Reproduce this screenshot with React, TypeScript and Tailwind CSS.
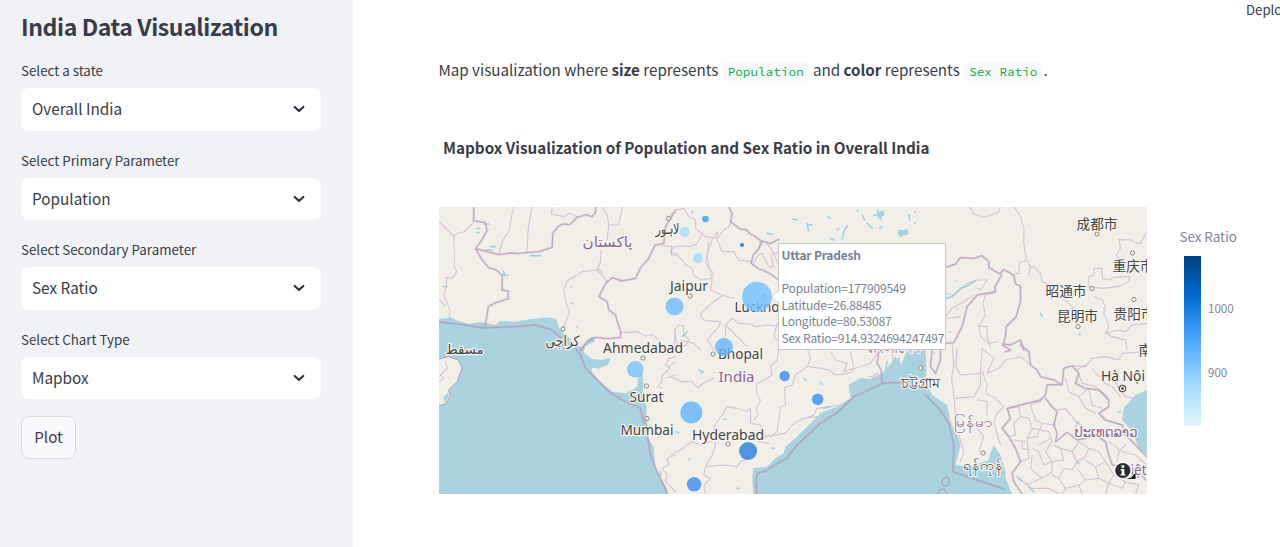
import { ReactNode } from "react";

const SANS = "font-['Source_Sans_Pro','Noto_Sans_CJK_SC',sans-serif]";

function SelectField({ label, value }: { label: string; value: string }) {
  return (
    <div className="mb-[17px] h-[72.5px]">
      <div className="mb-[5px] h-[25px] pt-px text-[13.35px] leading-6 whitespace-nowrap">{label}</div>
      <div className="flex h-[42.5px] items-center justify-between rounded-lg bg-white pr-[15px] pl-[11px]">
        <span className="pb-[2px] text-[15.3px] leading-6">{value}</span>
        <svg className="h-4 w-[14px]" viewBox="0 0 14 16" fill="none" stroke="#31333f" strokeWidth="2.2" strokeLinecap="round" strokeLinejoin="round">
          <path d="M2.7 6 7 10 11.3 6" />
        </svg>
      </div>
    </div>
  );
}

function Code({ children }: { children: ReactNode }) {
  return (
    <code className="mx-px rounded bg-[#f8f9fb] px-[5px] py-[2px] font-['Source_Code_Pro','Noto_Sans_Mono_CJK_SC','DejaVu_Sans_Mono',monospace] text-[12.7px] text-[#09ab3b]">
      {children}
    </code>
  );
}

/* Vector tiles use a 3x coordinate grid. */
function Tile({ x, y, major = "", minor = "", lakes = "" }: { x: number; y: number; major?: string; minor?: string; lakes?: string }) {
  return (
    <g transform={`translate(${x} ${y}) scale(.33333)`} fill="none" strokeLinejoin="round" strokeLinecap="round">
      <path d={lakes} stroke="#9ed3e2" strokeWidth="5" />
      <path d={minor} stroke="#cfb8cf" strokeWidth="3.4" opacity=".8" />
      <path d={major} stroke="#b590b5" strokeWidth="8" opacity=".18" />
      <path d={major} stroke="#b59ab8" strokeWidth="4" opacity=".75" />
    </g>
  );
}

type Label = { t: string; x: number; y: number; w: number; s?: number; c?: string };
const labels: Label[] = [
  { t: "پاکستان", x: 582, y: 247, w: 50, s: 14, c: "#8b6590" },
  { t: "لاہور", x: 655, y: 234, w: 24, s: 14 },
  { t: "کراچی", x: 545, y: 346, w: 34, s: 14 },
  { t: "مسقط", x: 445, y: 354, w: 38, s: 13 },
  { t: "Jaipur", x: 669.5, y: 291, w: 38 },
  { t: "Lucknow", x: 734, y: 312, w: 55 },
  { t: "Ahmedabad", x: 602.5, y: 353, w: 80 },
  { t: "Bhopal", x: 717.5, y: 359, w: 45 },
  { t: "India", x: 718, y: 382, w: 36, c: "#8b6590" },
  { t: "Surat", x: 629, y: 402, w: 34 },
  { t: "Mumbai", x: 620, y: 434.5, w: 53 },
  { t: "Hyderabad", x: 691.5, y: 439.5, w: 72 },
  { t: "成都市", x: 1076, y: 229, w: 41 },
  { t: "重庆市", x: 1112, y: 271, w: 41 },
  { t: "昭通市", x: 1045, y: 295.5, w: 41 },
  { t: "昆明市", x: 1056.5, y: 320.5, w: 41 },
  { t: "贵阳市", x: 1113, y: 318.5, w: 41 },
  { t: "南宁市", x: 1138, y: 355, w: 41 },
  { t: "Hà Nội", x: 1100.5, y: 381, w: 44 },
  { t: "বাংলাদেশ", x: 864, y: 353, w: 56, c: "#8b6590" },
  { t: "চট্টগ্রাম", x: 900, y: 388, w: 40 },
  { t: "မြန်မာ", x: 953, y: 427, w: 39, c: "#8b6590" },
  { t: "ရန်ကုန်", x: 962, y: 470, w: 41 },
  { t: "ປະເທດລາວ", x: 1074, y: 437, w: 63, c: "#8b6590" },
  { t: "Việt Nam", x: 1122, y: 475, w: 58, c: "#8b6590" },
];

const towns = [
  [668, 218.5], [689.5, 296], [562.5, 329], [763, 297], [642.5, 358], [646, 386], [646.5, 418.5], [712.5, 354],
  [727.5, 444], [1096.5, 234], [1132, 253], [1091.5, 288.5], [1077.5, 326.5], [1133.5, 299.5], [920, 368], [982.5, 453],
];

const bubbles: [number, number, number, string][] = [
  [705, 219, 3.3, "#3d9df3"], [684, 232, 5, "#a6dcff"], [697.5, 258.3, 5, "#a6dcff"], [741.5, 245, 2.1, "#1c73cc"],
  [674, 306.5, 9, "#70bdff"], [756.5, 296.8, 15, "#76c1ff"], [723.5, 347, 9, "#6ab7fc"], [634.8, 369.3, 8.3, "#7cc1ff"],
  [690.8, 412.5, 11, "#66b5fc"], [784.2, 376, 5.2, "#3d91e8"], [817.2, 399.3, 5.8, "#3d91e8"],
  [747.6, 451, 9, "#2b83dc"], [693.6, 484.3, 7.2, "#3d91e8"],
];

function IndiaMap() {
  return (
    <svg className="block h-[287px] w-[708px]" viewBox="438.5 207 708 287">
      <rect x="438" y="207" width="709" height="287" fill="#f2efe9" />
      <g fill="#aad3df">
        <path d="M438 319 451 317.3 455 320 468 324 480 322 495 325 500 320.7 515 321.7 530 319 550 317.3 556 319 558 327 563 333 568 337 575 345 582 347 587 340 592 336 595 341 585 346 583 352 591.7 359 601 360 610 357.7 608 364.3 598 369 591.7 366.7 591 371 598 380 611.7 391.7 625 393.3 636.7 386.7 637.7 376.7 641.7 370 643 381.7 642 395 645.7 405 646.7 435 653.3 448 655 468 665 488 668 494H438Z" />
        <path d="M753 494 751.7 478 753 468 766.7 466.7 774 459 783 453 785 446.7 793 440 806.7 426.7 820 413 836.7 406.7 850 398 848 385 860 378 870 379 882 373 890 364 895 356 900 366 906 352 925 350 926 368 925 381.7 931.7 395 946.7 405 950 421.7 956.7 435 960 445 955 465 968 466.7 988 460 993 445 1000 455 1005 471.7 1005 478 1011.7 494Z" />
        <path d="M1146.5 390 1135 395 1123.3 408 1121.7 420 1131.7 431.7 1138.3 448.3 1147 455Z" />
      </g>
      <path d="M438 359 448 356.7 458 360 461.7 368 456.7 381.7 448 390 450 396.7 445 404 438 406Z" fill="#f2efe9" stroke="#b79ab9" strokeWidth="1" />
      <g fill="#aad3df">
        <path d="M443 397 447 393 449 396 444 403Z" />
        <path d="M876 213 884 210 883 215 878 219Z" />
        <path d="M897 232 907 229 908 234 899 237Z" />
      </g>
      <Tile
        x={435} y={200}
        major="M115 20 114 62 148 68 155 90 136 125 120 146 155 155 190 164 225 159 250 160 275 158 310 155 350 142 352 100 368 80 382 72 402 74 412 65 425 52 450 44 470 50 480 38V20 M120 146 140 180 160 203 182 210 200 225V270L218 273 218 296 180 308 158 320 155 345 148 382 M720 32 690 80 685 130 658 136 640 175 615 203 600 235 560 243 530 233 512 248 490 290 515 305 520 330 540 345 555 395 555 412 520 416 480 412 455 424 435 450 M11 366 80 374 145 384 240 380 300 375 345 388 375 412"
        minor="M11 66 55 108 70 98 85 96 114 68 M55 108 57 200 64 215 50 235 32 232 33 260 25 285 43 330 40 358 M11 300 30 318 M235 20 228 50 222 90 200 125 190 162 M290 20 282 60 277 100 274 156 M350 20 348 42 385 50 400 40 425 50 M500 20 515 45 520 75 548 75 562 20 M520 75 515 120 M497 150 495 185 485 210 440 215 395 243 385 270 392 310 402 335 385 380 M485 205 500 215 500 225 482 210 M500 225 515 245 M555 398 605 395 630 408 650 403 675 424 655 440 M715 450 720 385 M680 138H708V165H720"
        lakes="M125 85H133M123 98H131M148 72H160M150 150H170M165 140H180M200 225H218M204 214 208 226M24 260H34M285 167H315M408 260V262M408 310H412M425 382V380"
      />
      <Tile
        x={435} y={345}
        major="M420 10 435 30 450 70 485 105 520 140 560 165 615 190 622 225 632 240 638 290 645 330 665 380 690 430 695 447"
        minor="M11 110 25 100 15 90 35 70 30 50 M720 35 700 40 690 60 705 70 680 90 680 110 665 125 680 130 M720 330 695 340 700 360 680 370 695 390 690 410 720 440 M720 50 700 65 M720 90 690 100"
        lakes="M470 66 500 60 520 45M675 380 676 390"
      />
      <Tile
        x={670} y={200}
        major="M175 20 185 42 180 65 210 88 225 88 240 102 255 110 270 122 300 130 325 118 M275 125 262 150 248 165 242 190 262 205 280 212 300 222 325 240"
        minor="M40 25 55 50 75 60 75 85 105 110 140 115 160 90 175 80 182 65 M75 85 95 100 80 130 60 140 35 138 10 140 0 155 20 165 35 180 45 195 65 205 70 225 90 240 122 235 130 220 115 205 105 185 110 160 125 120 140 95 M0 45 15 30 40 25 M140 95 140 120 155 155 190 155 205 180 240 185 M115 125 110 170 125 240 120 270 155 285 190 295 M155 288 130 305 95 335 90 350 105 362 150 365 145 380 110 420 130 450 M12 390 25 375 38 378 40 400 55 420 45 438 20 430 12 400 M165 410 165 375 185 355 205 370 240 372 255 380 290 375 325 378 M250 190 262 165 275 160 295 200 310 200 300 165 325 155 M270 125 265 150 M290 130 310 160 325 200 M320 370 310 410 325 425 M30 420 70 430 90 450 M165 375 200 410 230 440"
        lakes="M365 57 380 60M410 70 414 92M415 75 425 73M472 50 480 56M480 115 490 120M500 90 505 86M515 118 520 95 530 78M590 70 605 84M575 45 582 60M560 30 562 34M610 46 640 44M622 32 625 54M632 36 632 58M628 86 634 80M715 45 718 60M685 92 710 96M690 100 705 103M290 100 305 103M65 35 66 38M35 410 50 396"
      />
      <Tile
        x={670} y={345}
        major="M258 447 257 400 262 385 285 378 350 338 380 300 450 235 500 203 550 155 595 135 635 115 690 112 720 108 M635 115 632 75 620 55 625 20"
        minor="M0 95 35 110 65 110 80 128 105 110 130 100 M325 15 320 45 300 65 305 90 280 105 258 118 260 150 270 165 258 190 262 210 250 225 M410 10 420 40 410 65 375 90 365 120 342 128 345 180 330 185 325 225 320 260 300 275 M415 65 450 70 475 75 495 90 535 85 555 70 600 55 620 25 M130 245 155 210 170 185 200 190 230 200 240 190 240 235 270 240 285 275 265 290 295 295 M130 245 135 300 125 330 105 365 155 360 200 365 210 350 235 340 M0 330 30 315 65 290 95 300 130 285 M105 365 100 390 120 400 100 420 105 447 M285 275 345 265 365 240 400 220 440 215 M390 225 430 210 440 190 510 180 M480 20 495 45 530 55 520 80 550 70 540 20 M665 20 670 60 660 90 M595 95 605 95 620 85 628 105 605 95"
        lakes="M85 75 98 80 92 84M400 100 408 106M450 110 455 118M160 223H167M18 260 25 263M55 343H58M200 430H205M650 50 645 75M675 85 665 110M685 40 690 80M712 55 710 85M460 190 480 185M305 310H312"
      />
      <Tile
        x={905} y={200}
        major="M120 203 150 192 165 173 205 175 230 167 250 185 250 203 283 222 295 208 325 226 330 252 345 258 345 305 332 350 302 380 300 410 293 432 315 435 345 420 355 450 M120 430 145 428 170 380 185 320 215 285 270 275 268 262 288 225"
        minor="M190 20 205 42 235 52 265 42 280 35 285 20 M325 20 345 50 355 85 355 130 362 180 375 200 385 200 405 220 410 245 455 262 M362 180 342 190 340 220 325 222 M370 225 375 200 M723 95 705 130 690 128 675 120 640 118 645 145 632 165 645 180 M550 260 550 230 565 225 565 205 590 205 590 235 610 240 625 232 672 230 670 245 635 260 590 265 570 262 550 260 M565 290 590 300 600 320 595 340 610 380 600 400 640 390 660 395 680 375 723 370 M465 290 490 310 505 325 485 330 M600 400 620 410 660 420 665 450 M145 285 185 250 215 240 245 240 225 270 215 265 M120 280 145 285 M120 350 140 325 170 308 205 285 M125 355 165 350 M240 285 232 310 240 345 220 378 245 380 245 410 255 440 M240 285 268 278 M220 378 225 410 250 430 275 425"
        lakes="M122 295 140 290 165 265 185 258 210 242M405 340 410 350M523 400V405M30 35V38M10 48V45M28 70V68M152 243H154M155 327H157M133 395H135"
      />
      <Tile
        x={905} y={345}
        major="M290 0 315 15 300 20 M345 0 370 20 375 60 395 75 405 95 445 105 470 120 475 70 500 62 520 85 510 115 540 130 580 135 610 165 610 185 580 205 600 225 650 240 660 270 690 300 723 335 M470 118 425 120 420 150 405 165 345 180 305 190 315 220 290 250 310 275 330 310 345 350 320 385 325 410 350 447 M420 160 435 180 455 200 445 240 455 265 450 290 485 262 515 285 540 280 570 270 600 290 610 330 620 360 700 375 720 405 M60 150 100 190 130 235 145 300 142 380 200 400 295 432 M80 10 75 65 90 85 105 45 105 15"
        minor="M140 0 145 60 138 100 145 150 150 210 M155 10 150 65 165 90 225 85 230 10 M230 80 245 120 240 145 270 160 295 185 275 205 265 230 275 270 285 300 M225 85 225 120 205 155 150 160 M215 165 245 170 245 210 M245 85 280 70 300 45 345 35 370 55 M245 85 265 40 230 10 M160 270 175 320 165 350 M215 250 235 275 220 320 M540 60 515 75 530 115 570 125 605 155 M500 62 540 65 560 40 600 35 640 45 650 25 723 20 M560 70 580 95 620 90 640 130 660 155 690 160 M590 110 620 125 645 155 M480 100 490 140 520 155 540 190 570 205 M520 155 550 130 560 180 590 190 M455 195 480 190 500 215 515 235 505 265 M305 190 340 185 345 215 370 220 380 250 365 280 395 275 410 235 390 225 375 180 405 170 M345 215 325 235 330 270 310 275 M325 285 360 290 M365 285 370 340 345 350 M410 235 450 240 M380 250 430 260 440 290 M440 290 420 320 440 350 415 360 400 320 380 310 M380 330 375 370 410 400 360 420 M410 400 440 380 440 350 475 345 465 310 445 300 M465 310 500 320 515 350 500 375 475 370 460 400 440 390 M500 320 520 290 550 310 540 335 515 350 M550 310 580 320 600 350 570 365 540 345 M570 365 580 400 540 405 520 375 M600 350 625 390 610 415 580 400 M625 390 660 410 650 430 610 415 M460 400 480 430 520 420 540 405 M520 420 530 447 M480 430 470 447 M610 415 600 447 M660 410 700 420 690 447 M350 290 350 310 375 315 M400 300 435 280 M610 290 650 320 690 330 723 360 M660 300 640 320 635 350 M340 400 380 430 430 430 460 447 M30 10 0 20"
        lakes="M20 70 25 95M45 55 48 95M15 45 30 75M335 395 350 410M370 425 385 440M515 230 525 240M515 350 520 355M640 200H645M85 25H87"
      />
      <g fill="none" stroke="#a9a0bd" strokeWidth="1.2">
        <ellipse cx="945.5" cy="481.5" rx="3.5" ry="4.5" transform="rotate(25 945 481)" />
        <path d="M937 494C940 487 945 488 946 494" />
      </g>
      <g fill="#f7f5f1" stroke="#8a8782" strokeWidth="1">
        {towns.map(([x, y]) => (
          <circle key={`${x}-${y}`} cx={x} cy={y} r="2.1" />
        ))}
        <circle cx="1122" cy="388.5" r="3.2" stroke="#555" strokeWidth="1.2" />
        <circle cx="1122" cy="388.5" r="1" fill="#555" stroke="#555" />
      </g>
      <g className="font-['Noto_Sans','Noto_Sans_CJK_SC','DejaVu_Sans',sans-serif]" stroke="#f7f5f2" strokeWidth="2.4" strokeLinejoin="round" paintOrder="stroke">
        {labels.map((l) => (
          <text key={l.t} x={l.x} y={l.y} fontSize={l.s ?? 13.5} fill={l.c ?? "#444"} textLength={l.w} lengthAdjust="spacingAndGlyphs">
            {l.t}
          </text>
        ))}
      </g>
      <g opacity=".82">
        {bubbles.map(([x, y, r, c]) => (
          <circle key={`${x}-${y}`} cx={x} cy={y} r={r} fill={c} />
        ))}
      </g>
      <path d="M1118 479H1135V473L1130 478Z" fill="#111" />
      <circle cx="1122.5" cy="470.5" r="9.5" fill="#fff" opacity=".75" />
      <circle cx="1122.3" cy="470.5" r="7.6" fill="#2b2b2b" />
      <path d="M1121 465.2h2.8v2.5H1121zM1120.2 469h3.6v5.2h1.2v1.4h-5v-1.4h1.2v-3.7h-1z" fill="#fff" />
    </svg>
  );
}

function HoverCard() {
  return (
    <div className="absolute top-[36px] left-[339px] h-[106.5px] w-[168px] border border-[#c9c9cd] bg-white pl-[3px] text-[12px] leading-[16.8px] tracking-[-0.2px] whitespace-nowrap text-[#7b7f92]">
      <svg className="absolute top-[46px] -left-[7px] h-[14px] w-[8px]" viewBox="0 0 8 14">
        <path d="M8 0 0 7 8 14Z" fill="#fff" />
        <path d="M7 1 0 7 7 13" fill="none" stroke="#d4d4d8" strokeWidth=".7" />
      </svg>
      <div className="mt-[3px] mb-[16px] font-bold">Uttar Pradesh</div>
      <div>Population=177909549</div>
      <div>Latitude=26.88485</div>
      <div>Longitude=80.53087</div>
      <div>Sex Ratio=914.9324694247497</div>
    </div>
  );
}

export default function App() {
  return (
    <div className={`flex h-[547px] w-[1280px] overflow-hidden bg-white text-[#3a3c48] ${SANS}`}>
      <aside className="w-[353px] shrink-0 bg-[#f0f2f6] pr-8 pl-[21px]">
        <h1 className="mt-[9px] mb-[15px] h-[34px] text-[23.1px] leading-[34px] font-semibold tracking-[-0.42px] whitespace-nowrap">India Data Visualization</h1>
        <SelectField label="Select a state" value="Overall India" />
        <SelectField label="Select Primary Parameter" value="Population" />
        <SelectField label="Select Secondary Parameter" value="Sex Ratio" />
        <SelectField label="Select Chart Type" value="Mapbox" />
        <button className="flex h-[42.5px] w-[55px] items-center justify-center rounded-lg border border-[#d8dade] bg-[#f9f9fb] pb-[2px] text-[15.2px]">Plot</button>
      </aside>
      <main className="flex min-w-0 flex-1 flex-col pl-[85.5px]">
        <header className="flex h-[22px] justify-end">
          <span className="w-[34px] overflow-hidden text-[13.2px] leading-[19px] whitespace-nowrap">Deploy</span>
        </header>
        <p className="mt-[35px] h-6 text-[15.2px] leading-6 tracking-[-0.02px] whitespace-nowrap">
          Map visualization where <strong className="font-semibold">size</strong> represents <Code>Population</Code> and{" "}
          <strong className="font-semibold">color</strong> represents <Code>Sex Ratio</Code>.
        </p>
        <h2 className="mt-[54px] ml-[4.5px] h-6 text-[15.26px] leading-6 font-bold whitespace-nowrap">
          Mapbox Visualization of Population and Sex Ratio in Overall India
        </h2>
        <div className="mt-[48px] flex">
          <div className="relative h-[287px] w-[708px] shrink-0">
            <IndiaMap />
            <HoverCard />
          </div>
          <div className="ml-[33px] pt-[18.5px] text-[#808495]">
            <div className="h-[30px] text-[13.35px] leading-[22px] whitespace-nowrap">Sex Ratio</div>
            <div className="ml-1 flex">
              <div className="h-[170.5px] w-[17.5px] bg-[linear-gradient(to_bottom,#004280,#0054a3,#0068c9,#1c83e1,#3d9df3,#60b4ff,#83c9ff,#a6dcff,#c7ebff,#e4f5ff)]" />
              <div className="ml-[7px] flex flex-col gap-[44px] pt-[42.5px] text-[11.5px] leading-5">
                <span>1000</span>
                <span>900</span>
              </div>
            </div>
          </div>
        </div>
      </main>
    </div>
  );
}
